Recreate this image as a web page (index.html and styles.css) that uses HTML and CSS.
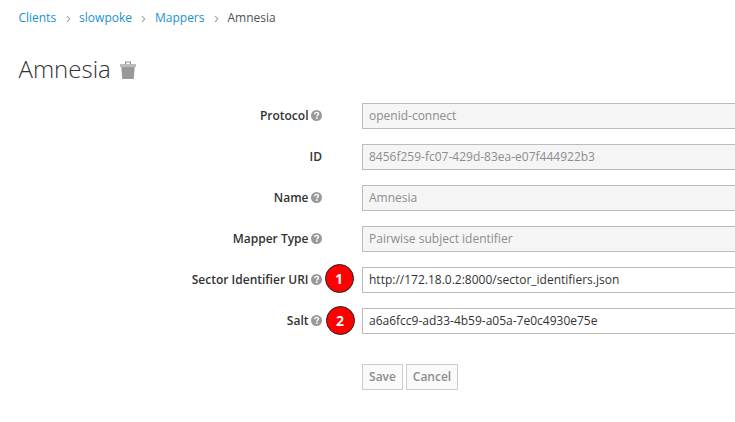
FILE: index.html
```html
<!DOCTYPE html>
<html lang="en">
<head>
<meta charset="utf-8">
<title>Amnesia</title>
<link rel="stylesheet" href="styles.css">
</head>
<body>
<svg class="defs" width="0" height="0" aria-hidden="true">
  <symbol id="help" viewBox="0 0 12 12">
    <circle cx="6" cy="6" r="6" fill="#999"/>
    <path d="M3.900 4.600C4 3.100 5 2.600 6 2.600c1.200 0 2.100.7 2.100 1.700C8.100 5.700 6.300 5.700 6.300 7.100" fill="none" stroke="#fff" stroke-width="1.600"/>
    <path d="M5.400 8h1.800v1.700H5.400z" fill="#fff"/>
  </symbol>
  <symbol id="chevron" viewBox="0 0 5 8">
    <path d="M1 1l2.700 3L1 7" fill="none" stroke="#9c9c9c" stroke-width="1.100"/>
  </symbol>
</svg>
<nav>
  <ol class="breadcrumb">
    <li><a href="#">Clients</a></li>
    <li><svg class="chevron"><use href="#chevron"/></svg><a href="#">slowpoke</a></li>
    <li><svg class="chevron"><use href="#chevron"/></svg><a href="#">Mappers</a></li>
    <li><svg class="chevron"><use href="#chevron"/></svg>Amnesia</li>
  </ol>
</nav>
<h1 class="title">Amnesia
  <svg class="trash" viewBox="0 0 16 18"><path d="M5 3V.5h6V3H9.700V1.600H6.300V3z" fill="#999"/><path d="M0 3h16v3H0z" fill="#bbb"/><path d="M1.300 6h13.400l-1 12H2.300z" fill="#999"/></svg>
</h1>
<form class="form">
  <div class="row"><label class="label">Protocol <svg class="help"><use href="#help"/></svg></label><div class="field disabled">openid-connect</div></div>
  <div class="row"><label class="label">ID</label><div class="field disabled">8456f259-fc07-429d-83ea-e07f444922b3</div></div>
  <div class="row"><label class="label">Name <svg class="help"><use href="#help"/></svg></label><div class="field disabled">Amnesia</div></div>
  <div class="row"><label class="label">Mapper Type <svg class="help"><use href="#help"/></svg></label><div class="field disabled">Pairwise subject identifier</div></div>
  <div class="row"><label class="label">Sector Identifier URI <svg class="help"><use href="#help"/></svg><span class="marker first">1</span></label><div class="field">http://172.18.0.2:8000/sector_identifiers.json</div></div>
  <div class="row"><label class="label">Salt <svg class="help"><use href="#help"/></svg><span class="marker">2</span></label><div class="field">a6a6fcc9-ad33-4b59-a05a-7e0c4930e75e</div></div>
  <div class="actions"><button type="button" class="button save">Save</button><button type="button" class="button">Cancel</button></div>
</form>
</body>
</html>
```
FILE: styles.css
```css
* { box-sizing: border-box; }
body {
  margin: 0;
  padding: 8px 0 0 18px;
  height: 422px;
  overflow: hidden;
  background: #fff;
  color: #333;
  font: 12px/20px "Open Sans", sans-serif;
}
.defs { position: absolute; }
.breadcrumb {
  display: flex;
  margin: 0;
  padding: 0 0 0 0.4px;
  list-style: none;
  color: #4d5258;
}
.breadcrumb a { color: #1a91d2; text-decoration: none; }
.chevron { width: 5px; height: 8px; margin: 0 8.500px 0 9.500px; vertical-align: -1px; }
.title {
  display: flex;
  align-items: center;
  gap: 9.5px;
  height: 32px;
  margin: 25px 0 18px;
  padding-left: 0.5px;
  font-size: 24px;
  font-weight: 300;
  line-height: 32px;
}
.trash { width: 16px; height: 18px; margin-top: 1px; }
.row {
  display: grid;
  grid-template-columns: 304px 1fr;
  column-gap: 40px;
  margin-bottom: 15px;
}
.label {
  display: flex;
  position: relative;
  align-items: center;
  justify-content: flex-end;
  gap: 2.5px;
  height: 26px;
  font-weight: 600;
}
.help { width: 11px; height: 11px; margin-bottom: 1px; }
.field {
  height: 26px;
  padding: 2px 6px;
  border: 1px solid #bbb;
  border-right: 0;
  background: #fff;
  white-space: nowrap;
}
.disabled { background: #f5f5f5; color: #8b8d8f; }
.marker {
  position: absolute;
  right: -32.500px;
  top: -2px;
  width: 29px;
  height: 29px;
  border: 1px solid #222;
  border-radius: 50%;
  background: #f00;
  color: #fff;
  font-size: 14px;
  font-weight: 700;
  line-height: 28px;
  text-align: center;
}
.first { right: -31.500px; top: -3.500px; }
.actions {
  display: flex;
  gap: 3px;
  margin: 30px 0 0 344px;
}
.button {
  width: 52px;
  height: 26px;
  padding: 0 0 1px;
  border: 1px solid #ccc;
  background: #fafafa;
  color: #8b8d8f;
  font: 600 12px/20px "Open Sans", sans-serif;
}
.save { width: 41px; }
```
